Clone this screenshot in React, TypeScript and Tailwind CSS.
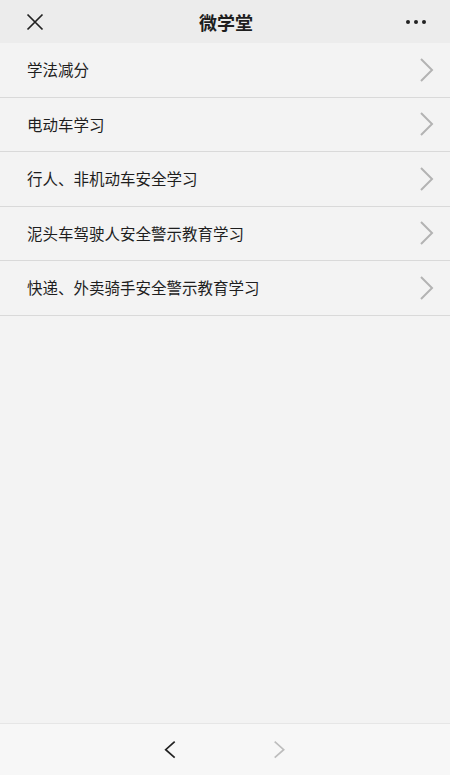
const items = [
  "学法减分",
  "电动车学习",
  "行人、非机动车安全学习",
  "泥头车驾驶人安全警示教育学习",
  "快递、外卖骑手安全警示教育学习",
];

const font = {
  fontFamily: '"Noto Sans CJK SC", "Noto Sans", sans-serif',
};

function Chevron({
  dir,
  className,
  width,
  height,
  stroke,
}: {
  dir: "left" | "right";
  className?: string;
  width: number;
  height: number;
  stroke: number;
}) {
  const pad = stroke;
  const w = width + pad * 2;
  const h = height + pad * 2;
  const points =
    dir === "right"
      ? `${pad},${pad} ${pad + width},${pad + height / 2} ${pad},${pad + height}`
      : `${pad + width},${pad} ${pad},${pad + height / 2} ${pad + width},${pad + height}`;
  return (
    <svg width={w} height={h} viewBox={`0 0 ${w} ${h}`} className={className}>
      <polyline
        points={points}
        fill="none"
        stroke="currentColor"
        strokeWidth={stroke}
        strokeLinejoin="miter"
      />
    </svg>
  );
}

export default function App() {
  return (
    <div
      className="flex h-[775px] w-[450px] flex-col bg-[#f3f3f3] text-[#1e1e1e]"
      style={font}
    >
      <header className="flex h-[43px] shrink-0 items-center justify-between bg-[#ececec] pl-[26px] pr-[24px]">
        <svg width="18" height="18" viewBox="0 0 18 18" className="text-[#222]">
          <path d="M1.5 1.5 L16.5 16.5 M16.5 1.5 L1.5 16.5" stroke="currentColor" strokeWidth="1.7" />
        </svg>
        <h1 className="pl-[2px] text-[18px] font-semibold leading-none">微学堂</h1>
        <div className="flex items-center gap-[4px]">
          <span className="h-[4px] w-[4px] rounded-full bg-[#222]" />
          <span className="h-[4px] w-[4px] rounded-full bg-[#222]" />
          <span className="h-[4px] w-[4px] rounded-full bg-[#222]" />
        </div>
      </header>

      <main className="flex-1">
        <ul>
          {items.map((item) => (
            <li
              key={item}
              className="flex h-[54.5px] items-center justify-between border-b border-[#d9d9d9] pl-[27px] pr-[16px]"
            >
              <span className="text-[15.5px] leading-none">{item}</span>
              <Chevron
                dir="right"
                width={11}
                height={22}
                stroke={2}
                className="text-[#b3b3b3]"
              />
            </li>
          ))}
        </ul>
      </main>

      <footer className="flex h-[52px] shrink-0 items-center justify-center gap-[96px] border-t border-[#e6e6e6] bg-[#f7f7f7] pr-[1px]">
        <Chevron dir="left" width={9} height={16} stroke={1.7} className="text-[#222]" />
        <Chevron dir="right" width={9} height={16} stroke={1.7} className="text-[#bdbdbd]" />
      </footer>
    </div>
  );
}
